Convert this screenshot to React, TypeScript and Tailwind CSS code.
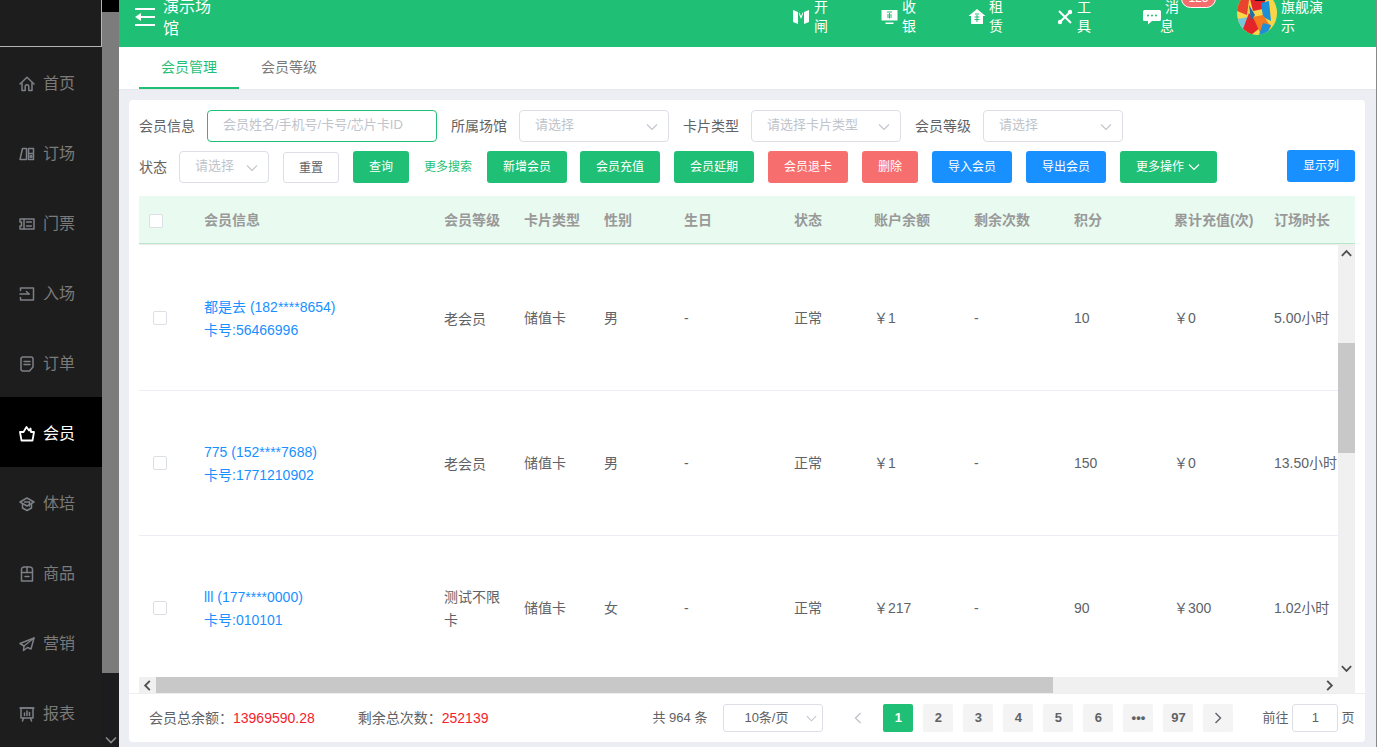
import React from "react";

const font = { fontFamily: '"Liberation Sans", "Noto Sans CJK SC", sans-serif' };

const Chevron = ({ dir = "down", cls = "", w = 1.2, color = "#c0c4cc" }: { dir?: string; cls?: string; w?: number; color?: string }) => {
  const pts: Record<string, string> = {
    down: "2,4.5 7,9.5 12,4.5",
    up: "2,9.5 7,4.5 12,9.5",
    left: "9.5,2 4.5,7 9.5,12",
    right: "4.5,2 9.5,7 4.5,12",
  };
  return (
    <svg viewBox="0 0 14 14" className={cls} fill="none">
      <polyline points={pts[dir]} stroke={color} strokeWidth={w} />
    </svg>
  );
};

const S = ({ children, active }: { children: React.ReactNode; active?: boolean }) => (
  <svg viewBox="0 0 16 16" className="w-[16px] h-[16px] shrink-0" fill="none" stroke={active ? "#fff" : "#7d8086"} strokeWidth={active ? 1.8 : 1.5} strokeLinejoin="round" strokeLinecap="round">
    {children}
  </svg>
);

const navItems: { label: string; icon: React.ReactNode; active?: boolean }[] = [
  { label: "首页", icon: <><path d="M1 8 L8 1.2 L15 8" /><path d="M3 7 V14.5 H6.2 V10.5 A1.8 1.8 0 0 1 9.8 10.5 V14.5 H13 V7" /></> },
  { label: "订场", icon: <><path d="M3.5 2.5 H7.5 V13.5 H1 Z" /><path d="M9.5 2.5 H14.5 V13.5 H9.5 Z" /><path d="M10 7.5 H14" /><circle cx="12" cy="10.5" r="1" /></> },
  { label: "门票", icon: <><path d="M1 3 H15 V13 H1 V10 H2.5 V6 H1 Z" /><path d="M5 3 V13" /><path d="M7.5 6 H12.5" /><path d="M7.5 10 H12.5" /></> },
  { label: "入场", icon: <><path d="M1.5 4.5 V2 H14.5 V14 H1.5 V11.5" /><path d="M1 8 H10" /><path d="M7.5 5.5 L10 8" /></> },
  { label: "订单", icon: <><path d="M4 1 H12 A2 2 0 0 1 14 3 V11 L10.5 15 H4 A2 2 0 0 1 2 13 V3 A2 2 0 0 1 4 1 Z" /><path d="M5 5.5 H11" /><path d="M5 8.5 H11" /></> },
  { label: "会员", active: true, icon: <path d="M1 6 H4.5 L7.5 1 L10 4.5 L11.5 2.5 L12 6 H15 L13.5 14.5 H2.5 Z" /> },
  { label: "体培", icon: <><path d="M8 2 L15 6 L8 10 L1 6 Z" /><path d="M3.5 8 V12 L8 14.5 L12.5 12 V8" /><path d="M5.5 6 H10.5" /><path d="M10.5 6 V10" /></> },
  { label: "商品", icon: <><path d="M5 1 H11 A2.5 2.5 0 0 1 13.5 3.5 V15 H2.5 V3.5 A2.5 2.5 0 0 1 5 1 Z" /><path d="M2.5 6.5 H13.5" /><path d="M8 1 V6.5" /><path d="M6 10.5 H10" /></> },
  { label: "营销", icon: <><path d="M15 2 L1 7.5 L5 10 L4.5 14.5 L8.5 11.5 L12 13 Z" /><path d="M15 2 L5 10" /></> },
  { label: "报表", icon: <><path d="M2 2 H14 V12 H2 Z" /><path d="M1 2 H15" /><path d="M5.5 9.5 V7" /><path d="M8 9.5 V5" /><path d="M10.5 9.5 V6.5" /><path d="M4.5 12 L3.5 15" /><path d="M11.5 12 L12.5 15" /></> },
];

const W = ({ children }: { children: React.ReactNode }) => (
  <svg viewBox="0 0 18 16" className="w-[18px] h-[16px]" fill="#fff">{children}</svg>
);

const Label = ({ children, cls = "" }: { children: React.ReactNode; cls?: string }) => (
  <span className={`text-[14px] leading-[20px] text-[#606266] whitespace-nowrap ${cls}`}>{children}</span>
);

const Select = ({ ph, cls }: { ph: string; cls: string }) => (
  <div className={`h-[32px] rounded-[4px] border border-[#dcdfe6] bg-white pl-[15px] pr-[9px] flex items-center justify-between ${cls}`}>
    <span className="text-[13px] text-[#c0c4cc] whitespace-nowrap mb-[2px]">{ph}</span>
    <Chevron cls="w-[14px] h-[14px] shrink-0 mt-[2px]" w={1.1} />
  </div>
);

const Btn = ({ children, cls }: { children: React.ReactNode; cls: string }) => (
  <div className={`h-[32px] rounded-[3px] flex items-center justify-center text-[12px] text-white whitespace-nowrap ${cls}`}>{children}</div>
);

const cols = "grid grid-cols-[55px_240px_80px_80px_80px_110px_80px_100px_100px_100px_100px_100px] items-center";

const Box = ({ cls = "" }: { cls?: string }) => (
  <div className={`w-[14px] h-[14px] rounded-[2px] border border-[#dcdfe6] bg-white ${cls}`} />
);

const rows = [
  { name: "都是去 (182****8654)", card: "卡号:56466996", level: "老会员", sex: "男", bal: "￥1", pts: "10", top: "￥0", dur: "5.00小时" },
  { name: "775 (152****7688)", card: "卡号:1771210902", level: "老会员", sex: "男", bal: "￥1", pts: "150", top: "￥0", dur: "13.50小时" },
  { name: "lll (177****0000)", card: "卡号:010101", level: "测试不限卡", sex: "女", bal: "￥217", pts: "90", top: "￥300", dur: "1.02小时" },
];

const heads = ["会员信息", "会员等级", "卡片类型", "性别", "生日", "状态", "账户余额", "剩余次数", "积分", "累计充值(次)", "订场时长"];

const Page = ({ children, active, cls = "" }: { children: React.ReactNode; active?: boolean; cls?: string }) => (
  <div className={`w-[30px] h-[28px] rounded-[2px] flex items-center justify-center text-[13px] font-bold ${active ? "bg-[#1fbf75] text-white" : "bg-[#f4f4f5] text-[#606266]"} ${cls}`}>{children}</div>
);

export default function App() {
  return (
    <div className="flex h-[747px] w-[1377px] overflow-hidden bg-[#eceef3]" style={font}>
      {/* sidebar */}
      <aside className="w-[102px] shrink-0 bg-[#1d1d1d] flex flex-col">
        <div className="h-[47px] shrink-0 border-b border-r border-[#b5b5b5]" />
        {navItems.map((n) => (
          <div key={n.label} className={`h-[70px] shrink-0 flex items-center pl-[19px] pt-[4px] gap-[8px] ${n.active ? "bg-black" : ""}`}>
            <S active={n.active}>{n.icon}</S>
            <span className={`text-[16px] ${n.active ? "text-white" : "text-[#7a7a7a]"}`}>{n.label}</span>
          </div>
        ))}
      </aside>
      {/* sidebar scrollbar */}
      <div className="w-[17px] shrink-0 bg-[#1c1c1f] flex flex-col">
        <div className="h-[12px] bg-black shrink-0" />
        <div className="h-[661px] bg-[#7c7c7c] shrink-0" />
        <div className="flex-1 flex items-end justify-center pb-0">
          <Chevron cls="w-[14px] h-[14px]" w={1.6} color="#8a8a8a" />
        </div>
      </div>

      {/* main */}
      <main className="w-[1257px] shrink-0 flex flex-col">
        <header className="h-[47px] shrink-0 bg-[#1fbf75] flex items-start overflow-hidden text-white pl-[16px]">
          <svg viewBox="0 0 20 18" className="w-[20px] h-[18px] mt-[8px] shrink-0" fill="#fff">
            <rect x="0" y="0" width="20" height="2" />
            <rect x="5" y="8" width="15" height="2" />
            <rect x="0" y="16" width="20" height="2" />
            <polygon points="0,9 6,5 6,13" />
          </svg>
          <div className="w-[48px] ml-[8px] mt-[-4px] text-[16px] leading-[22px]">演示场馆</div>
          <div className="w-[582px] shrink-0" />
          {/* 开闸 */}
          <div className="w-[88px] shrink-0 flex items-start">
            <div className="mt-[9px] w-[21px]">
              <W><path d="M0 1 L5 3 V15 L0 13 Z M16 1 L11 3 V15 L16 13 Z M6 3 L8 7 L10 3 V5 L8 10 L6 5 Z" /></W>
            </div>
            <div className="w-[14px] mt-[-2px] text-[14px] leading-[19px]">开闸</div>
          </div>
          {/* 收银 */}
          <div className="w-[87px] shrink-0 flex items-start">
            <div className="mt-[9px] w-[21px]">
              <W>
                <path d="M0.5 1 H16.5 V11.5 H0.5 Z" />
                <rect x="4.5" y="13.5" width="8" height="1.5" />
                <path d="M6 3 H11 M6 6 H11 M6 8 H11 M8.5 4 V9.5" stroke="#1fbf75" strokeWidth="1" />
              </W>
            </div>
            <div className="w-[14px] mt-[-2px] text-[14px] leading-[19px]">收银</div>
          </div>
          {/* 租赁 */}
          <div className="w-[89px] shrink-0 flex items-start">
            <div className="mt-[9px] w-[21px]">
              <W>
                <path d="M9 0 L17.5 7 H15 V15 H3 V7 H0.5 Z" />
                <path d="M7 5 H11 M6.5 8 H11.5 M6.5 10.5 H11.5 M9 6 V13" stroke="#1fbf75" strokeWidth="1" />
              </W>
            </div>
            <div className="w-[14px] mt-[-2px] text-[14px] leading-[19px]">租赁</div>
          </div>
          {/* 工具 */}
          <div className="w-[86px] shrink-0 flex items-start">
            <div className="mt-[9px] w-[20px]">
              <W>
                <path d="M2 2 L14 14" stroke="#fff" strokeWidth="2" />
                <path d="M13 3 L3 13" stroke="#fff" strokeWidth="2" />
                <circle cx="3" cy="13" r="2.2" />
                <circle cx="13" cy="3" r="2.2" />
              </W>
            </div>
            <div className="w-[14px] mt-[-2px] text-[14px] leading-[19px]">工具</div>
          </div>
          {/* 消息 */}
          <div className="w-[94px] shrink-0 flex items-start relative">
            <div className="mt-[10px] w-[22px]">
              <W>
                <path d="M1.5 0 H16.5 A1.5 1.5 0 0 1 18 1.5 V9.5 A1.5 1.5 0 0 1 16.5 11 H9 L5 14.5 V11 H1.5 A1.5 1.5 0 0 1 0 9.5 V1.5 A1.5 1.5 0 0 1 1.5 0 Z" />
                <circle cx="5" cy="5.5" r="1" fill="#1fbf75" />
                <circle cx="9" cy="5.5" r="1" fill="#1fbf75" />
                <circle cx="13" cy="5.5" r="1" fill="#1fbf75" />
              </W>
            </div>
            <div className="mt-[-2px] text-[14px] leading-[19px]">
              <div>消</div>
              <div className="ml-[-5px]">息</div>
            </div>
            <div className="absolute left-[38px] top-[-11px] w-[35px] h-[19px] rounded-[10px] bg-[#f56c6c] border border-white text-[12px] leading-[17px] text-center">125</div>
          </div>
          {/* 用户 */}
          <div className="shrink-0 flex items-start">
            <svg viewBox="0 0 40 44" className="w-[40px] h-[44px] mt-[-9px] shrink-0">
              <defs>
                <clipPath id="av"><ellipse cx="20" cy="22" rx="20" ry="22" /></clipPath>
              </defs>
              <g clipPath="url(#av)">
                <rect width="40" height="44" fill="#f9d648" />
                <polygon points="0,9 12,9 10,24 0,20" fill="#e8452c" />
                <polygon points="12,4 30,2 26,18 16,20" fill="#e3242b" />
                <polygon points="14,0 34,0 28,10 18,10" fill="#1b1b1b" />
                <polygon points="24,12 32,10 34,30 26,26" fill="#1d8fd6" />
                <polygon points="0,28 12,26 14,36 4,40" fill="#78c4dc" />
                <polygon points="12,22 24,36 14,44 6,38" fill="#e3242b" />
                <polygon points="16,26 26,24 34,36 24,44" fill="#f47b20" />
                <polygon points="26,32 34,34 30,44 22,44" fill="#1d8fd6" />
                <polygon points="12,14 18,24 14,30" fill="#1f6fb0" />
              </g>
            </svg>
            <div className="w-[42px] ml-[4px] mt-[-2px] text-[14px] leading-[19px]">旗舰演示</div>
          </div>
        </header>

        {/* tabs */}
        <div className="h-[43px] shrink-0 bg-white border-b border-[#e4e7ed] flex pl-[20px] text-[14px]">
          <div className="w-[100px] h-[42px] border-b-2 border-[#1fbf75] text-[#1fbf75] flex items-center justify-center">会员管理</div>
          <div className="pl-[22px] h-[41px] text-[#7a7a7a] flex items-center">会员等级</div>
        </div>

        {/* card */}
        <div className="ml-[10px] mr-[10px] mt-[10px] w-[1236px] h-[642px] bg-white rounded-[4px] flex flex-col shrink-0">
          <div className="px-[10px] pt-[10px]">
            <div className="flex items-center h-[32px]">
              <Label>会员信息</Label>
              <div className="ml-[12px] w-[230px] h-[32px] rounded-[4px] border border-[#1fbf75] pl-[15px] flex items-center whitespace-nowrap">
                <span className="text-[13px] text-[#c0c4cc] mb-[2px]">会员姓名/手机号/卡号/芯片卡ID</span>
              </div>
              <Label cls="ml-[14px]">所属场馆</Label>
              <Select ph="请选择" cls="ml-[12px] w-[150px]" />
              <Label cls="ml-[14px]">卡片类型</Label>
              <Select ph="请选择卡片类型" cls="ml-[12px] w-[150px]" />
              <Label cls="ml-[14px]">会员等级</Label>
              <Select ph="请选择" cls="ml-[12px] w-[140px]" />
            </div>
            <div className="flex items-start h-[32px] mt-[9px]">
              <Label cls="mt-[6px] w-[28px]">状态</Label>
              <Select ph="请选择" cls="ml-[12px] w-[90px]" />
              <div className="ml-[14px] mt-[1px] w-[56px] h-[31px] rounded-[3px] border border-[#dcdfe6] flex items-center justify-center text-[12px] text-[#606266]">重置</div>
              <Btn cls="ml-[14px] w-[56px] bg-[#1fbf75]">查询</Btn>
              <div className="ml-[15px] w-[48px] h-[32px] flex items-center text-[12px] text-[#1fbf75] whitespace-nowrap">更多搜索</div>
              <Btn cls="ml-[15px] w-[80px] bg-[#1fbf75]">新增会员</Btn>
              <Btn cls="ml-[13px] w-[80px] bg-[#1fbf75]">会员充值</Btn>
              <Btn cls="ml-[14px] w-[80px] bg-[#1fbf75]">会员延期</Btn>
              <Btn cls="ml-[14px] w-[80px] bg-[#f76e6e]">会员退卡</Btn>
              <Btn cls="ml-[14px] w-[56px] bg-[#f76e6e]">删除</Btn>
              <Btn cls="ml-[14px] w-[80px] bg-[#1890ff]">导入会员</Btn>
              <Btn cls="ml-[14px] w-[80px] bg-[#1890ff]">导出会员</Btn>
              <Btn cls="ml-[14px] w-[97px] bg-[#1fbf75] gap-[3px]">更多操作<Chevron cls="w-[14px] h-[14px]" color="#fff" /></Btn>
              <Btn cls="ml-[70px] mt-[-1px] w-[68px] bg-[#1890ff]">显示列</Btn>
            </div>
          </div>

          {/* table */}
          <div className="mx-[10px] mt-[13px] flex flex-col">
            <div className={`${cols} h-[48px] pt-[2px] bg-[#e9faf0] border-b border-[#b8e6c9] overflow-hidden`}>
              <div className="pl-[10px]"><Box /></div>
              {heads.map((h) => (
                <div key={h} className="px-[10px] text-[14px] font-bold text-[#999999] whitespace-nowrap">{h}</div>
              ))}
            </div>
            <div className="h-[1px] bg-[#eeeeee]" />
            <div className="flex h-[432px]">
              <div className="w-[1199px] overflow-hidden pt-[1px]">
                {rows.map((r) => (
                  <div key={r.name} className={`${cols} h-[145px] border-b border-[#ebeef5] text-[14px] text-[#606266] whitespace-nowrap`}>
                    <div className="pl-[14px]"><Box /></div>
                    <div className="px-[10px] pt-[2px] leading-[23px] text-[#1890ff]">
                      <div>{r.name}</div>
                      <div>{r.card}</div>
                    </div>
                    <div className="px-[10px] pt-[2px] leading-[23px] whitespace-normal">{r.level}</div>
                    <div className="px-[10px]">储值卡</div>
                    <div className="px-[10px]">{r.sex}</div>
                    <div className="px-[10px]">-</div>
                    <div className="px-[10px]">正常</div>
                    <div className="px-[10px]">{r.bal}</div>
                    <div className="px-[10px]">-</div>
                    <div className="px-[10px]">{r.pts}</div>
                    <div className="px-[10px]">{r.top}</div>
                    <div className="px-[10px]">{r.dur}</div>
                  </div>
                ))}
              </div>
              <div className="w-[17px] shrink-0 bg-[#f0f0f0] flex flex-col">
                <div className="h-[17px] shrink-0 flex items-center justify-center"><Chevron dir="up" cls="w-[13px] h-[13px]" w={2} color="#505050" /></div>
                <div className="h-[81px] shrink-0" />
                <div className="h-[110px] shrink-0 bg-[#c8c8c8]" />
                <div className="flex-1" />
                <div className="h-[17px] shrink-0 flex items-center justify-center"><Chevron dir="down" cls="w-[13px] h-[13px]" w={2} color="#505050" /></div>
              </div>
            </div>
            <div className="flex h-[16px] bg-[#f0f0f0]">
              <div className="w-[17px] shrink-0 flex items-center justify-center"><Chevron dir="left" cls="w-[13px] h-[13px]" w={2} color="#505050" /></div>
              <div className="w-[897px] shrink-0 bg-[#c8c8c8]" />
              <div className="w-[268px] shrink-0" />
              <div className="w-[17px] shrink-0 flex items-center justify-center"><Chevron dir="right" cls="w-[13px] h-[13px]" w={2} color="#505050" /></div>
            </div>
          </div>

          {/* footer */}
          <div className="h-[49px] border-t border-[#eeeeee] flex items-center pl-[20px] text-[14px] text-[#606266]">
            <span className="whitespace-nowrap">会员总余额：</span>
            <span className="text-[#f5222d]">13969590.28</span>
            <span className="ml-[43px] whitespace-nowrap">剩余总次数：</span>
            <span className="text-[#f5222d]">252139</span>
            <span className="ml-[164px] text-[13px] whitespace-nowrap">共 964 条</span>
            <div className="ml-[16px] w-[100px] h-[28px] rounded-[3px] border border-[#dcdfe6] flex items-center justify-between pl-[20px] pr-[4px] text-[13px]">
              <span className="whitespace-nowrap">10条/页</span>
              <Chevron cls="w-[13px] h-[13px]" w={1.1} />
            </div>
            <div className="ml-[20px] w-[30px] h-[28px] flex items-center justify-center"><Chevron dir="left" cls="w-[14px] h-[14px]" color="#c0c4cc" w={1.4} /></div>
            <Page active cls="ml-[10px]">1</Page>
            <Page cls="ml-[10px]">2</Page>
            <Page cls="ml-[10px]">3</Page>
            <Page cls="ml-[10px]">4</Page>
            <Page cls="ml-[10px]">5</Page>
            <Page cls="ml-[10px]">6</Page>
            <Page cls="ml-[10px]">•••</Page>
            <Page cls="ml-[10px]">97</Page>
            <Page cls="ml-[10px]"><Chevron dir="right" cls="w-[14px] h-[14px]" color="#606266" w={1.4} /></Page>
            <span className="ml-[29px] text-[13px] whitespace-nowrap">前往</span>
            <div className="ml-[4px] w-[46px] h-[28px] rounded-[3px] border border-[#dcdfe6] flex items-center justify-center text-[13px]">1</div>
            <span className="ml-[3px] text-[13px]">页</span>
          </div>
        </div>
      </main>
      <div className="w-[1px] shrink-0 bg-[#8a8a8a]" />
    </div>
  );
}
